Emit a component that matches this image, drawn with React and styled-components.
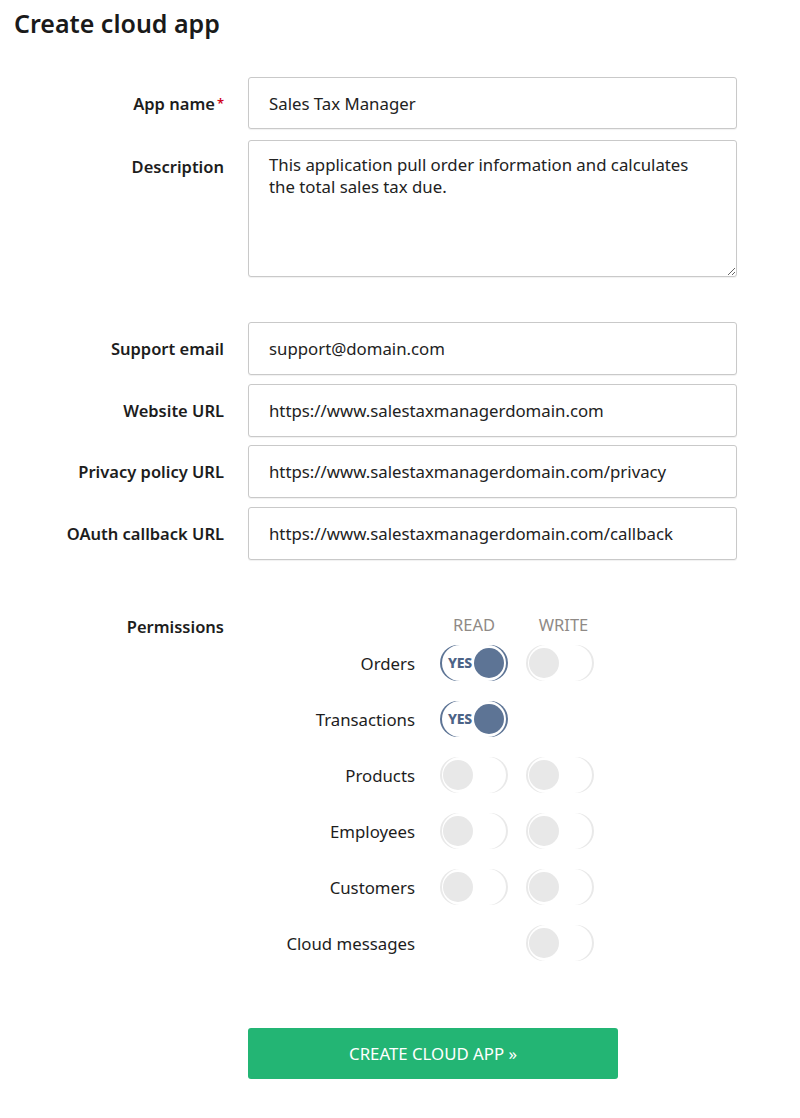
import React from "react";
import styled, { createGlobalStyle, css } from "styled-components";

const FONT = `"Noto Sans", "Lato", sans-serif`;

const Global = createGlobalStyle`
  html, body { margin: 0; padding: 0; background: #fff; }
  body { font-family: ${FONT}; color: #1b1b1b; }
  * { box-sizing: border-box; }
`;

const Page = styled.div`
  width: 800px;
  padding: 0 0 40px 0;
`;

const Title = styled.h1`
  margin: 0;
  padding: 6px 0 0 14px;
  font-size: 25px;
  line-height: 34px;
  font-weight: 600;
  color: #1a1a1a;
`;

const Form = styled.form`
  display: grid;
  grid-template-columns: 224px 489px;
  column-gap: 24px;
  margin-top: 37px;
`;

const Label = styled.label`
  text-align: right;
  font-size: 16.5px;
  font-weight: 600;
  line-height: 20px;
  padding-top: 17px;
  color: #1d1d1d;
`;

const Required = styled.span`
  color: #d0021b;
  font-size: 13px;
  vertical-align: top;
  margin-left: 2px;
  position: relative;
  top: -1px;
`;

const fieldBase = css`
  width: 100%;
  border: 1px solid #c9c9c9;
  border-radius: 3px;
  box-shadow: 0 1px 1px rgba(0, 0, 0, 0.06);
  font-family: ${FONT};
  font-size: 16.8px;
  color: #222;
  padding: 0 20px;
  background: #fff;
  outline: none;
`;

const Input = styled.input`
  ${fieldBase};
  height: ${(p) => p.$h || 53}px;
  margin-bottom: ${(p) => p.$mb ?? 8.5}px;
`;

const TextArea = styled.textarea`
  ${fieldBase};
  display: block;
  height: 137px;
  padding-top: 13px;
  padding-right: 30px;
  line-height: 22px;
  resize: vertical;
`;

const Spacer = styled.div`
  grid-column: 1 / -1;
  height: ${(p) => p.$h}px;
`;

const PermLabel = styled(Label)`
  padding-top: 0;
  margin-top: 8px;
`;

const PermBlock = styled.div`
  margin-top: 6px;
`;

const PermHead = styled.div`
  display: grid;
  grid-template-columns: 167px 68px 68px;
  column-gap: 25px;
`;

const ColHead = styled.div`
  text-align: center;
  font-size: 16.5px;
  line-height: 20px;
  color: #8f8a86;
  margin-left: ${(p) => p.$shift || 0}px;
`;

const PermRow = styled.div`
  display: grid;
  grid-template-columns: 167px 68px 68px;
  column-gap: 25px;
  align-items: center;
  height: 56px;
  & > :nth-child(3) { margin-left: -7px; }
`;

const PermName = styled.div`
  text-align: right;
  font-size: 16.8px;
  color: #1d1d1d;
`;

const Toggle = styled.div`
  position: relative;
  width: 68px;
  height: 36px;
  border-radius: 18px;
  box-shadow: inset 2px 0 0 ${(p) => (p.$on ? "#5d7495" : "#e9e9e9")},
    inset -2px 0 0 ${(p) => (p.$on ? "#5d7495" : "#e9e9e9")};
`;

const Knob = styled.span`
  position: absolute;
  top: 3px;
  left: ${(p) => (p.$on ? "34px" : "3px")};
  width: 30px;
  height: 30px;
  border-radius: 50%;
  background: ${(p) => (p.$on ? "#5d7495" : "#e8e8e8")};
`;

const Yes = styled.span`
  position: absolute;
  left: 8px;
  top: 0;
  line-height: 36px;
  font-size: 14px;
  font-weight: 800;
  letter-spacing: -0.3px;
  color: #4c6386;
`;

const Empty = styled.div``;

const Button = styled.button`
  grid-column: 2;
  width: 370px;
  height: 51px;
  border: none;
  border-radius: 3px;
  background: #23b574;
  color: #fff;
  font-family: ${FONT};
  font-size: 16.8px;
  font-weight: 400;
  cursor: pointer;
`;

function Switch({ on }) {
  return (
    <Toggle $on={on}>
      {on && <Yes>YES</Yes>}
      <Knob $on={on} />
    </Toggle>
  );
}

const perms = [
  ["Orders", true, false],
  ["Transactions", true, null],
  ["Products", false, false],
  ["Employees", false, false],
  ["Customers", false, false],
  ["Cloud messages", null, false],
];

const fields = [
  ["Support email", "support@domain.com"],
  ["Website URL", "https://www.salestaxmanagerdomain.com"],
  ["Privacy policy URL", "https://www.salestaxmanagerdomain.com/privacy"],
  ["OAuth callback URL", "https://www.salestaxmanagerdomain.com/callback"],
];

export default function App() {
  return (
    <Page>
      <Global />
      <Title>Create cloud app</Title>
      <Form onSubmit={(e) => e.preventDefault()}>
        <Label>
          App name<Required>*</Required>
        </Label>
        <Input $h={52} $mb={11} defaultValue="Sales Tax Manager" />
        <Label>Description</Label>
        <TextArea defaultValue={"This application pull order information and calculates the total sales tax due."} />
        <Spacer $h={45} />
        {fields.map(([l, v]) => (
          <React.Fragment key={l}>
            <Label>{l}</Label>
            <Input defaultValue={v} />
          </React.Fragment>
        ))}
        <Spacer $h={41} />
        <PermLabel>Permissions</PermLabel>
        <PermBlock>
          <PermHead>
            <span />
            <ColHead>READ</ColHead>
            <ColHead $shift={-7}>WRITE</ColHead>
          </PermHead>
          {perms.map(([name, r, w]) => (
            <PermRow key={name}>
              <PermName>{name}</PermName>
              {r === null ? <Empty /> : <Switch on={r} />}
              {w === null ? <Empty /> : <Switch on={w} />}
            </PermRow>
          ))}
        </PermBlock>
        <Spacer $h={57} />
        <Button type="button">CREATE CLOUD APP »</Button>
      </Form>
    </Page>
  );
}
